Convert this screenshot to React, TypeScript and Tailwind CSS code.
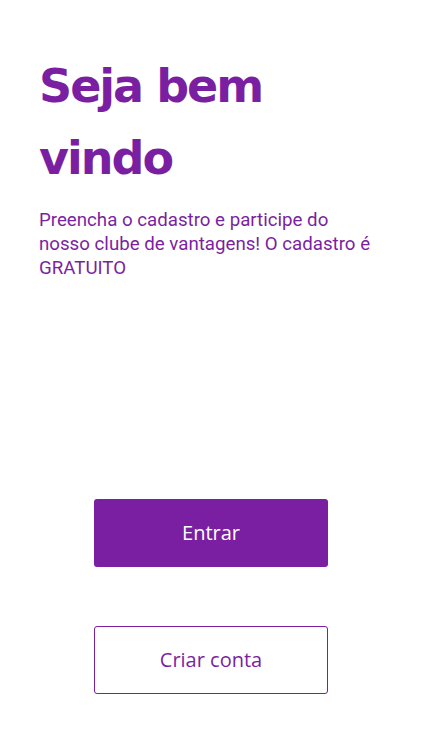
export default function App() {
  return (
    <div className="flex h-[750px] w-[422px] flex-col bg-white">
      <div className="px-[39px] pt-[50px]">
        <h1 className="text-[46px] font-bold leading-[72px] text-[#7b1fa2] [font-family:'DejaVu_Sans',sans-serif] tracking-[-2px]">
          Seja bem
          <br />
          vindo
        </h1>
        <p className="mt-[14px] w-[340px] text-[18.7px] leading-[24px] text-[#7b1fa2] [font-family:Roboto,sans-serif]">
          Preencha o cadastro e participe do nosso clube de vantagens! O cadastro é GRATUITO
        </p>
      </div>
      <div className="mt-auto mb-[56px] flex flex-col items-center gap-[59px]">
        <button className="flex h-[68px] w-[234px] items-center justify-center rounded-[3px] bg-[#7b1fa2] text-[20px] text-white [font-family:'Open_Sans',sans-serif]">
          Entrar
        </button>
        <button className="flex h-[68px] w-[234px] items-center justify-center rounded-[3px] border-[1.5px] border-[#7b1fa2] bg-white text-[20px] text-[#7b1fa2] [font-family:'Open_Sans',sans-serif]">
          Criar conta
        </button>
      </div>
    </div>
  );
}
